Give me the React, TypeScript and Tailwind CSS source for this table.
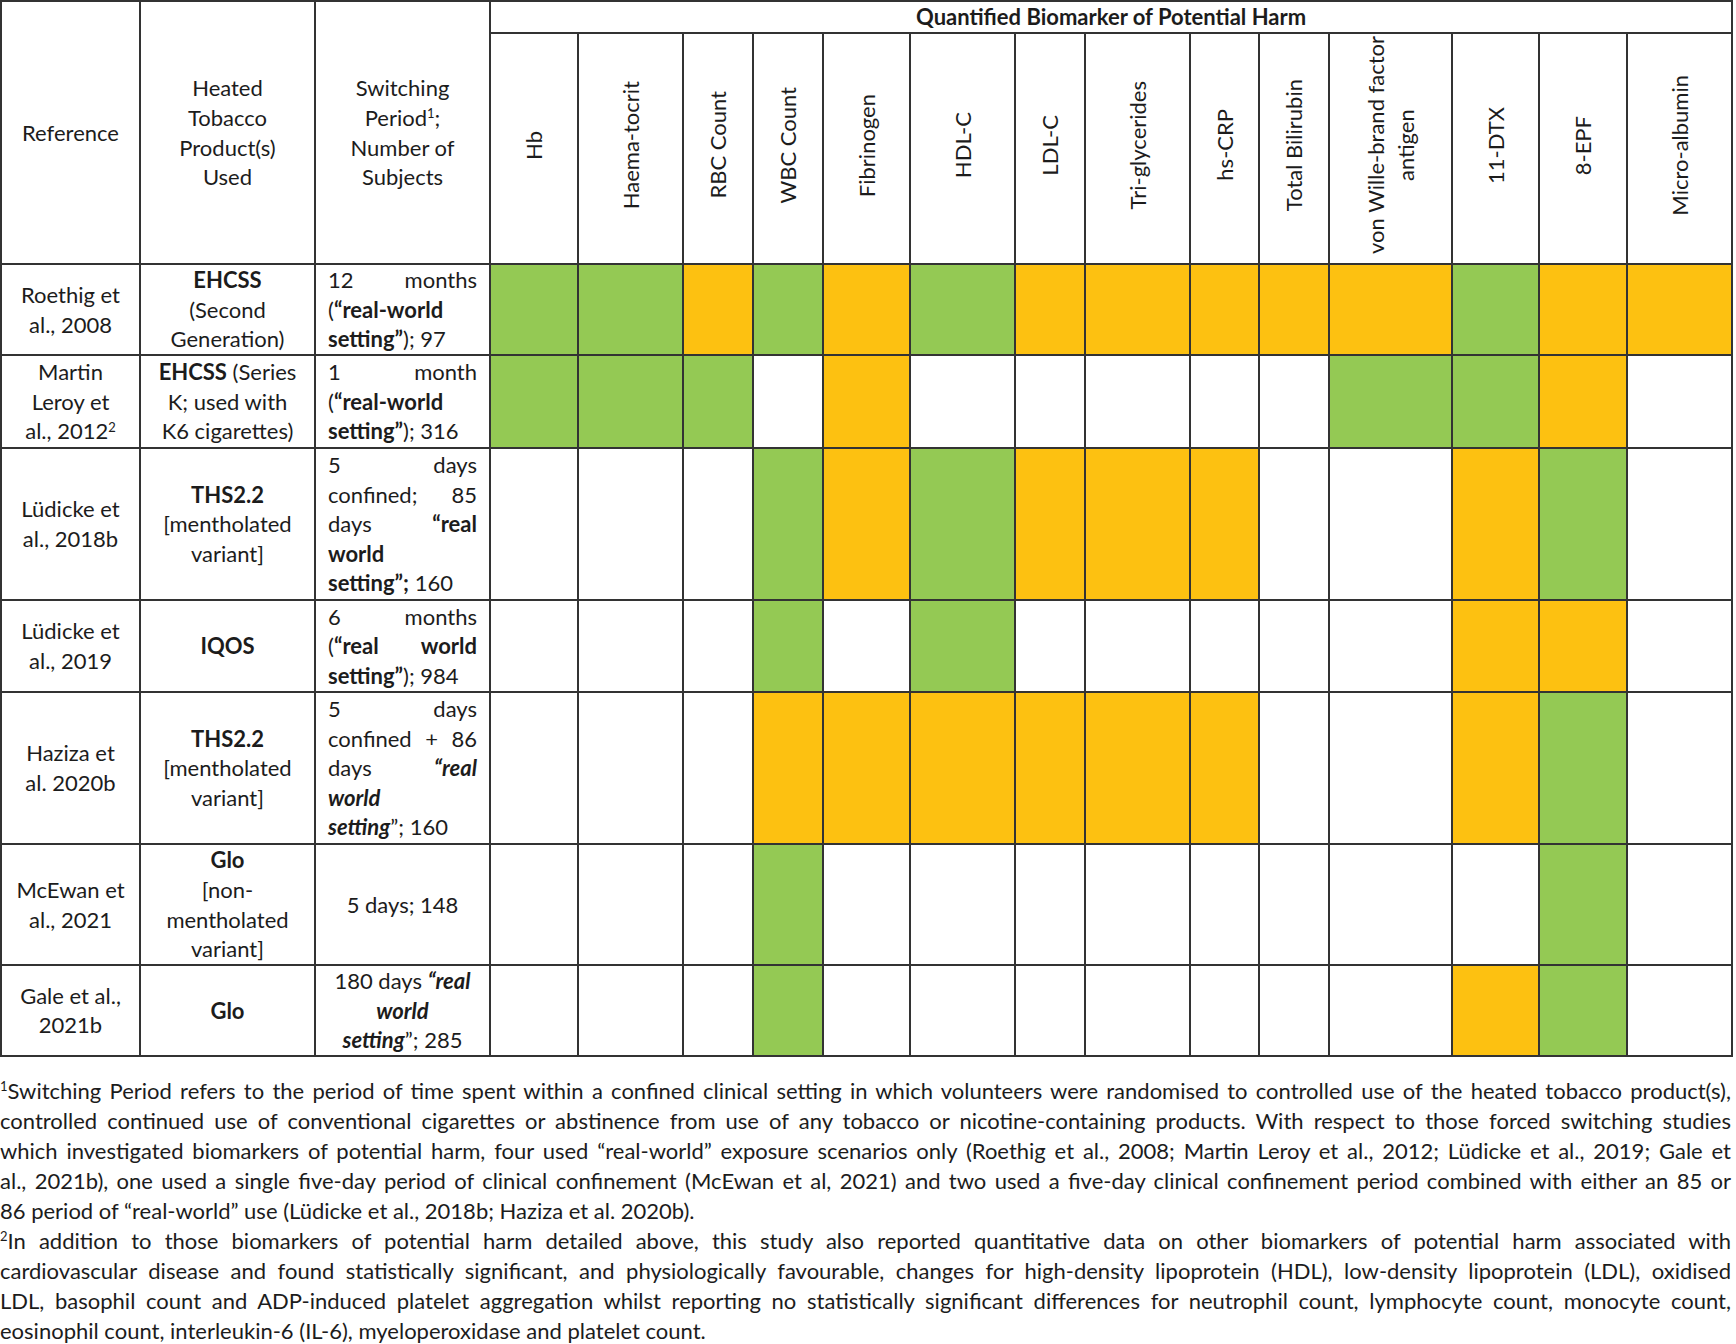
import type { ReactNode } from 'react';

const G = 'bg-[#94c954]';
const O = 'bg-[#fdc111]';

const markers: { label: ReactNode; w: number }[] = [
  { label: 'Hb', w: 88 },
  { label: 'Haema-tocrit', w: 105 },
  { label: 'RBC Count', w: 70 },
  { label: 'WBC Count', w: 70 },
  { label: 'Fibrinogen', w: 87 },
  { label: 'HDL-C', w: 105 },
  { label: 'LDL-C', w: 70 },
  { label: 'Tri-glycerides', w: 105 },
  { label: 'hs-CRP', w: 69 },
  { label: 'Total Bilirubin', w: 70 },
  {
    label: (
      <>
        von Wille-brand factor
        <br />
        antigen
      </>
    ),
    w: 123,
  },
  { label: '11-DTX', w: 87 },
  { label: '8-EPF', w: 88 },
  { label: 'Micro-albumin', w: 105 },
];

// justified line / plain last line
function J({ children }: { children: ReactNode }) {
  return <span className="block text-justify [text-align-last:justify]">{children}</span>;
}
function L({ children }: { children: ReactNode }) {
  return <span className="block text-left">{children}</span>;
}

const b = (t: string) => <b className="font-bold">{t}</b>;
const bi = (t: string) => <b className="font-bold italic">{t}</b>;
const sup = (t: string) => <sup className="text-[13px] -top-[0.6em]">{t}</sup>;

type Row = { h: number; ref: ReactNode; prod: ReactNode; sw: ReactNode; swCenter?: boolean; marks: string };

const rows: Row[] = [
  {
    h: 91,
    ref: <>Roethig et<br />al., 2008</>,
    prod: <>{b('EHCSS')}<br />(Second<br />Generation)</>,
    sw: (
      <>
        <J>12 months</J>
        <L>({b('“real-world')}</L>
        <L>{b('setting”')}); 97</L>
      </>
    ),
    marks: 'GGOGOGOOOOOGOO',
  },
  {
    h: 93,
    ref: <>Martin<br />Leroy et<br />al., 2012{sup('2')}</>,
    prod: <>{b('EHCSS')} (Series<br />K; used with<br />K6 cigarettes)</>,
    sw: (
      <>
        <J>1 month</J>
        <L>({b('“real-world')}</L>
        <L>{b('setting”')}); 316</L>
      </>
    ),
    marks: 'GGGWOWWWWWGGOW',
  },
  {
    h: 152,
    ref: <>Lüdicke et<br />al., 2018b</>,
    prod: <>{b('THS2.2')}<br />[mentholated<br />variant]</>,
    sw: (
      <>
        <J>5 days</J>
        <J>confined; 85</J>
        <J>days {b('“real')}</J>
        <L>{b('world')}</L>
        <L>{b('setting”;')} 160</L>
      </>
    ),
    marks: 'WWWGOGOOOWWOGW',
  },
  {
    h: 92,
    ref: <>Lüdicke et<br />al., 2019</>,
    prod: <>{b('IQOS')}</>,
    sw: (
      <>
        <J>6 months</J>
        <J>({b('“real world')}</J>
        <L>{b('setting”')}); 984</L>
      </>
    ),
    marks: 'WWWGWGWWWWWOOW',
  },
  {
    h: 152,
    ref: <>Haziza et<br />al. 2020b</>,
    prod: <>{b('THS2.2')}<br />[mentholated<br />variant]</>,
    sw: (
      <>
        <J>5 days</J>
        <J>confined + 86</J>
        <J>days {bi('“real')}</J>
        <L>{bi('world')}</L>
        <L>{bi('setting')}”; 160</L>
      </>
    ),
    marks: 'WWWOOOOOOWWOGW',
  },
  {
    h: 121,
    ref: <>McEwan et<br />al., 2021</>,
    prod: <>{b('Glo')}<br />[non-<br />mentholated<br />variant]</>,
    sw: <>5 days; 148</>,
    swCenter: true,
    marks: 'WWWGWWWWWWWWGW',
  },
  {
    h: 90,
    ref: <>Gale et al.,<br />2021b</>,
    prod: <>{b('Glo')}</>,
    sw: (
      <>
        180 days {bi('“real')}
        <br />
        {bi('world')}
        <br />
        {bi('setting')}”; 285
      </>
    ),
    swCenter: true,
    marks: 'WWWGWWWWWWWOGW',
  },
];

const cell = 'border-2 border-[#333]';

export default function App() {
  return (
    <div className="w-[1736px] min-h-[1344px] bg-white font-[Lato,sans-serif] text-[22px] leading-[29.6px] text-[#1c1c1c]">
      <table className="table-fixed border-collapse w-[1733px]">
        <colgroup>
          <col className="w-[139px]" />
          <col className="w-[175px]" />
          <col className="w-[175px]" />
          {markers.map((m, i) => (
            <col key={i} style={{ width: m.w }} />
          ))}
        </colgroup>
        <thead>
          <tr className="h-[32px]">
            <th rowSpan={2} className={`${cell} font-normal text-center align-middle px-2`}>
              Reference
            </th>
            <th rowSpan={2} className={`${cell} font-normal text-center align-middle px-2`}>
              Heated
              <br />
              Tobacco
              <br />
              Product(s)
              <br />
              Used
            </th>
            <th rowSpan={2} className={`${cell} font-normal text-center align-middle px-2`}>
              Switching
              <br />
              Period{sup('1')};
              <br />
              Number of
              <br />
              Subjects
            </th>
            <th colSpan={14} className={`${cell} font-bold text-center align-middle leading-[28px]`}>
              Quantified Biomarker of Potential Harm
            </th>
          </tr>
          <tr className="h-[231px]">
            {markers.map((m, i) => (
              <th key={i} className={`${cell} font-normal text-center align-middle p-0`}>
                <span className="inline-block rotate-180 [writing-mode:vertical-rl] text-center leading-[30px]">
                  {m.label}
                </span>
              </th>
            ))}
          </tr>
        </thead>
        <tbody>
          {rows.map((r, ri) => (
            <tr key={ri} style={{ height: r.h }}>
              <td className={`${cell} text-center align-middle px-2`}>{r.ref}</td>
              <td className={`${cell} text-center align-middle px-2`}>{r.prod}</td>
              <td className={`${cell} align-middle px-3 ${r.swCenter ? 'text-center' : ''}`}>{r.sw}</td>
              {r.marks.split('').map((m, mi) => (
                <td key={mi} className={`${cell} ${m === 'G' ? G : m === 'O' ? O : 'bg-white'}`} />
              ))}
            </tr>
          ))}
        </tbody>
      </table>

      <div className="w-[1731px] mt-[19px] text-[22px] leading-[30px]">
        <J>
          {sup('1')}Switching Period refers to the period of time spent within a confined clinical setting in which volunteers were randomised to controlled use of the heated tobacco product(s),
        </J>
        <J>
          controlled continued use of conventional cigarettes or abstinence from use of any tobacco or nicotine-containing products. With respect to those forced switching studies
        </J>
        <J>
          which investigated biomarkers of potential harm, four used “real-world” exposure scenarios only (Roethig et al., 2008; Martin Leroy et al., 2012; Lüdicke et al., 2019; Gale et
        </J>
        <J>
          al., 2021b), one used a single five-day period of clinical confinement (McEwan et al, 2021) and two used a five-day clinical confinement period combined with either an 85 or
        </J>
        <L>86 period of “real-world” use (Lüdicke et al., 2018b; Haziza et al. 2020b).</L>
        <J>
          {sup('2')}In addition to those biomarkers of potential harm detailed above, this study also reported quantitative data on other biomarkers of potential harm associated with
        </J>
        <J>
          cardiovascular disease and found statistically significant, and physiologically favourable, changes for high-density lipoprotein (HDL), low-density lipoprotein (LDL), oxidised
        </J>
        <J>
          LDL, basophil count and ADP-induced platelet aggregation whilst reporting no statistically significant differences for neutrophil count, lymphocyte count, monocyte count,
        </J>
        <L>eosinophil count, interleukin-6 (IL-6), myeloperoxidase and platelet count.</L>
      </div>
    </div>
  );
}
